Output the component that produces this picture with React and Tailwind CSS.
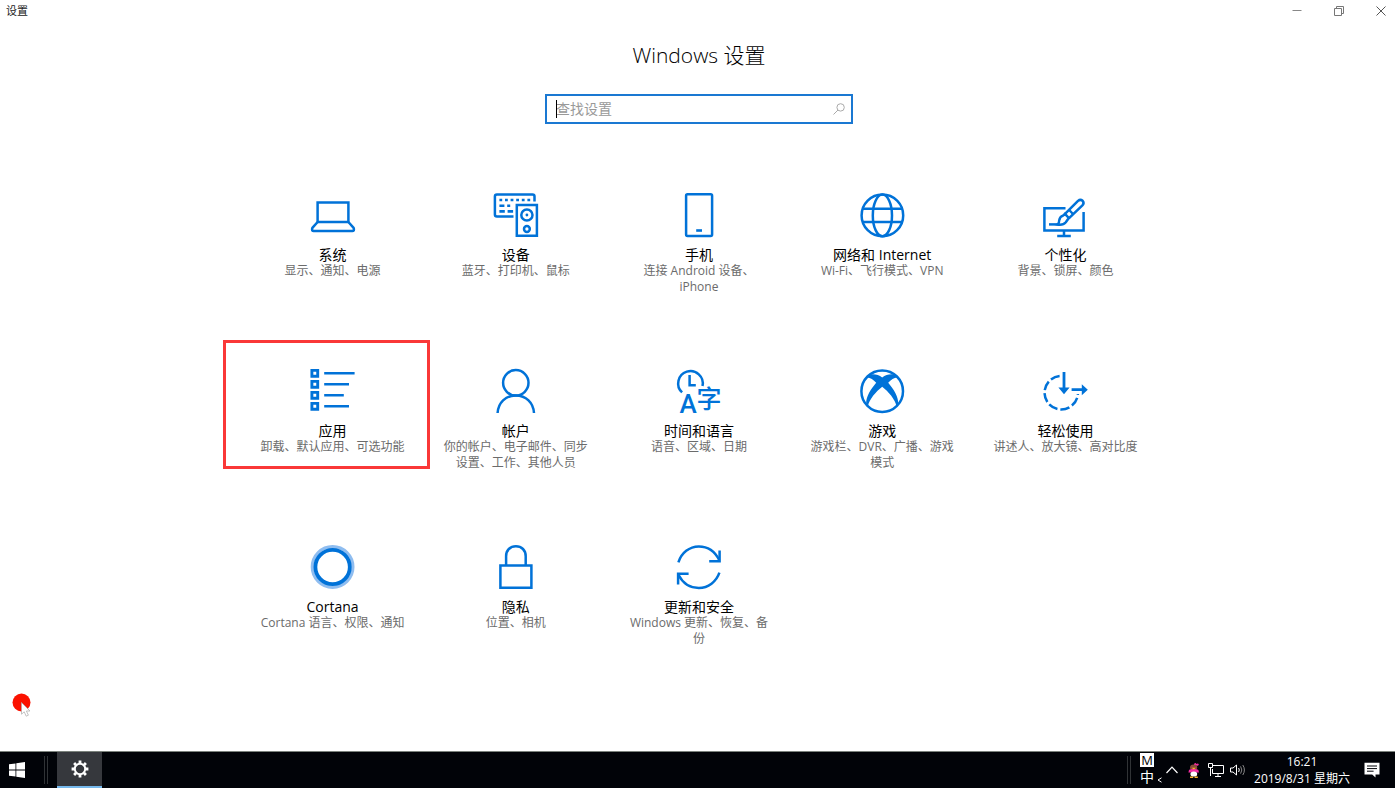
const stroke = { fill: "none", stroke: "currentColor", strokeWidth: 2.5 };

function Glyph({ children }) {
  return (
    <svg viewBox="0 0 44 44" className="h-11 w-11 shrink-0 overflow-visible text-[#0072d8]" aria-hidden="true">
      {children}
    </svg>
  );
}

const LaptopIcon = () => (
  <Glyph>
    <g {...stroke}>
      <path d="M6.6 29V9.6H37.4V29Z" />
      <path d="M6.6 29L1.6 34.6Q1.1 35.2 1.1 36V36.6Q1.1 38 2.5 38H41.5Q42.9 38 42.9 36.6V36Q42.9 35.2 42.4 34.6L37.4 29" />
    </g>
  </Glyph>
);

const DevicesIcon = () => (
  <Glyph>
    <g {...stroke}>
      <path d="M19.5 23.6H2.9Q.9 23.6 .9 21.6V3.4Q.9 1.4 2.9 1.4H38.5Q40.5 1.4 40.5 3.4V8.6" />
      <path d="M22.8 12.1H42.9V42.7H22.8Z" />
      <circle cx="32.9" cy="22" r="5.6" />
      <circle cx="32.9" cy="36" r="2.9" />
    </g>
    <circle cx="32.9" cy="22" r="1.4" fill="currentColor" />
    <g stroke="currentColor" strokeWidth="2.6">
      <path d="M5.4 7H37" strokeDasharray="2.8 2.8" />
      <path d="M5.4 12.7H10.4M13.2 12.7H16.2M5.4 18.4H10.8M13.6 18.4H19.1" />
    </g>
  </Glyph>
);

const PhoneIcon = () => (
  <Glyph>
    <rect x="9.1" y="1.3" width="26" height="41.6" rx="1.4" {...stroke} />
    <path d="M19.2 37.5H25" stroke="currentColor" strokeWidth="2.6" />
  </Glyph>
);

const GlobeIcon = () => (
  <Glyph>
    <g {...stroke}>
      <circle cx="22.4" cy="22.4" r="20.8" />
      <ellipse cx="22.4" cy="22.4" rx="9.6" ry="20.8" />
      <path d="M2.8 15.8H42M2.8 29H42" />
    </g>
  </Glyph>
);

const PersonalizeIcon = () => (
  <Glyph>
    <g {...stroke}>
      <path d="M22.5 15.2H1.4V37.6H40.6V19.1" />
      <path d="M21 38V42.6M14.2 42.9H27.8" />
      <path d="M22 20.8L35 7.9Q37.4 5.9 39.6 7.8Q41.6 10.2 39.4 12.4L25.8 25.4" strokeLinejoin="round" />
      <path d="M26.2 17L30 21" />
      <path d="M22 20.8L25.8 25L22.8 29.2Q20.2 32.4 14.4 31.4Q16.4 30 16.2 27.4Q16.8 23.6 20 22.6Z" />
      <path d="M6 31.4H16" />
    </g>
  </Glyph>
);

const AppsIcon = () => (
  <Glyph>
    <path
      d="M.9 1.4h5.8v5.8h-5.8zM.9 12.4h5.8v5.8h-5.8zM.9 23.4h5.8v5.8h-5.8zM.9 34.4h5.8v5.8h-5.8z"
      fill="none"
      stroke="currentColor"
      strokeWidth="2.9"
    />
    <path d="M13.2 4.3H43.6M13.2 15.3H38M13.2 26.3H32.8M13.2 37.3H38" stroke="currentColor" strokeWidth="2.5" />
  </Glyph>
);

const AccountIcon = () => (
  <Glyph>
    <g {...stroke}>
      <circle cx="21.8" cy="13.8" r="12.7" />
      <path d="M3.6 44C4.2 33.6 11.6 26.5 21.8 26.5S39.4 33.6 40 44" />
    </g>
  </Glyph>
);

const TimeIcon = () => (
  <Glyph>
    <path d="M5.1 23.4A12.3 12.3 0 1 1 25.5 17" {...stroke} />
    <path d="M12.6 6V16.2H18.8" {...stroke} />
    <text x="11" y="43.8" textAnchor="middle" fill="currentColor" fontFamily="Roboto, sans-serif" fontWeight="500" fontSize="26">A</text>
    <text x="32" y="38.8" textAnchor="middle" fill="currentColor" fontFamily="Noto Sans CJK SC, sans-serif" fontWeight="500" fontSize="25">字</text>
  </Glyph>
);

const GamingIcon = () => (
  <Glyph>
    <circle cx="22.2" cy="22.2" r="20.8" {...stroke} />
    <path
      d="M9 6C13.4 4.4 18.4 5.8 22.2 8.4C26 5.8 31 4.4 35.4 6L37.4 8.4C34.4 8.2 31 10.6 28.2 13.8C33.6 20 38.6 28 38.2 34.6L36.4 37C35 30.2 28.4 22.6 22.2 17.8C16 22.6 9.4 30.2 8 37L6.2 34.6C5.8 28 10.8 20 16.2 13.8C13.4 10.6 10 8.2 7 8.4Z"
      fill="currentColor"
    />
  </Glyph>
);

const EaseIcon = () => (
  <Glyph>
    <path d="M16.6 7.1A16.7 16.7 0 1 0 34.9 25" {...stroke} strokeDasharray="9.4 3" />
    <path d="M21 3V20M28.6 20.7H40" {...stroke} strokeWidth="2.8" />
    <path d="M15.4 18.4H26.6L21 25.2ZM38.8 15.2V26.2L44.8 20.7Z" fill="currentColor" />
  </Glyph>
);

const CortanaIcon = () => (
  <Glyph>
    <circle cx="21.6" cy="22" r="20.3" fill="none" stroke="#8fbdf0" strokeWidth="3.2" />
    <circle cx="21.6" cy="22" r="17.2" fill="none" stroke="currentColor" strokeWidth="3.8" />
  </Glyph>
);

const LockIcon = () => (
  <Glyph>
    <g {...stroke}>
      <path d="M6.4 20.4H37.4V42.8H6.4Z" />
      <path d="M12.1 20V11.2C12.1 5.2 16.1 1.3 21.9 1.3S31.7 5.2 31.7 11.2V20" />
    </g>
  </Glyph>
);

const UpdateIcon = () => (
  <Glyph>
    <g {...stroke}>
      <path d="M1.4 17.4C4.4 7.8 12.4 1.4 21.8 1.4C30.4 1.4 37.8 6 42.2 15" />
      <path d="M42.6 5.6V16.2H32.2" />
      <path d="M42.4 27.6C39.4 36.6 31.2 42.9 21.8 42.9C13.2 42.9 5.8 38.2 1.6 30" />
      <path d="M1.1 39.6V28.8H11.6" />
    </g>
  </Glyph>
);

const categories = [
  { title: "系统", detail: "显示、通知、电源", Icon: LaptopIcon },
  { title: "设备", detail: "蓝牙、打印机、鼠标", Icon: DevicesIcon },
  { title: "手机", detail: "连接 Android 设备、iPhone", Icon: PhoneIcon },
  { title: "网络和 Internet", detail: "Wi-Fi、飞行模式、VPN", Icon: GlobeIcon },
  { title: "个性化", detail: "背景、锁屏、颜色", Icon: PersonalizeIcon },
  { title: "应用", detail: "卸载、默认应用、可选功能", Icon: AppsIcon, marked: true },
  { title: "帐户", detail: "你的帐户、电子邮件、同步设置、工作、其他人员", Icon: AccountIcon },
  { title: "时间和语言", detail: "语音、区域、日期", Icon: TimeIcon },
  { title: "游戏", detail: "游戏栏、DVR、广播、游戏模式", Icon: GamingIcon },
  { title: "轻松使用", detail: "讲述人、放大镜、高对比度", Icon: EaseIcon },
  { title: "Cortana", detail: "Cortana 语言、权限、通知", Icon: CortanaIcon },
  { title: "隐私", detail: "位置、相机", Icon: LockIcon },
  { title: "更新和安全", detail: "Windows 更新、恢复、备份", Icon: UpdateIcon },
];

function Category({ title, detail, Icon, marked }) {
  return (
    <li className="relative flex min-h-32 justify-center">
      <a href="#" className="flex w-[148px] flex-col items-center text-center">
        <Icon />
        <span className="mt-2.5 text-sm leading-4 whitespace-nowrap text-black">{title}</span>
        <span className="text-xs leading-4 text-[#6b6b6b]">{detail}</span>
      </a>
      {marked && (
        <span className="pointer-events-none absolute -top-[29px] -left-[18px] h-[129px] w-[207px] border-3 border-[#fa3838]" />
      )}
    </li>
  );
}

function TitleBar() {
  const button = "flex h-5 w-7 items-center justify-center";
  return (
    <header className="flex h-[22px] items-center justify-between pl-1.5 text-[11px] text-[#222]">
      <span>设置</span>
      <div className="flex gap-3.5">
        <button aria-label="最小化" className={button}>
          <svg viewBox="0 0 10 10" className="h-2.5 w-2.5"><path d="M.5 4.5H9.5" stroke="#888" /></svg>
        </button>
        <button aria-label="还原" className={button}>
          <svg viewBox="0 0 10 10" className="h-2.5 w-2.5" fill="none" stroke="#777">
            <path d="M.5 2.5H7.5V9.5H.5ZM2.5 2.5V.5H9.5V7.5H7.5" />
          </svg>
        </button>
        <button aria-label="关闭" className={button}>
          <svg viewBox="0 0 10 10" className="h-2.5 w-2.5"><path d="M.5 .5L9.5 9.5M9.5 .5L.5 9.5" stroke="#555" /></svg>
        </button>
      </div>
    </header>
  );
}

function SearchBox() {
  return (
    <div className="relative mt-6 flex h-[30px] w-[308px] items-center border-2 border-[#1a78d2] bg-white pr-1.5 pl-[9px]">
      <input
        type="text"
        aria-label="查找设置"
        placeholder="查找设置"
        className="min-w-0 flex-1 text-sm text-black outline-none placeholder:text-[#999]"
      />
      <span className="absolute top-1 left-[9px] h-[18px] w-px bg-black" />
      <svg viewBox="0 0 12 12" className="h-3 w-3" fill="none" stroke="#aaa">
        <circle cx="7.6" cy="4.4" r="3.7" />
        <path d="M5 7L.5 11.5" />
      </svg>
    </div>
  );
}

function Divider() {
  return <span className="h-7 w-1 border-x border-[#303336]" />;
}

function Taskbar() {
  return (
    <footer className="flex h-[37px] items-stretch justify-between border-t border-[#7b827c] bg-[#010308] text-white">
      <div className="flex items-center">
        <button aria-label="开始" className="flex h-full w-11 items-center pl-[9px]">
          <svg viewBox="0 0 16 16" className="h-4 w-4" fill="#fff">
            <path d="M0 2.3L6.5 1.4V7.6H0ZM7.3 1.3L16 0V7.6H7.3ZM0 8.4H6.5V14.6L0 13.7ZM7.3 8.4H16V16L7.3 14.7Z" />
          </svg>
        </button>
        <Divider />
        <button aria-label="设置" className="ml-[9px] flex h-full w-[45px] items-center justify-center border-b-2 border-[#76b9ed] bg-[#36383d]">
          <svg viewBox="0 0 18 18" className="h-[18px] w-[18px]" fill="none" stroke="#fff">
            <circle cx="9" cy="9" r="5.2" strokeWidth="2" />
            <path
              d="M9 .6V3.2M9 14.8V17.4M.6 9H3.2M14.8 9H17.4M3.1 3.1L4.9 4.9M13.1 13.1L14.9 14.9M3.1 14.9L4.9 13.1M13.1 4.9L14.9 3.1"
              strokeWidth="2.8"
            />
          </svg>
        </button>
      </div>
      <div className="flex items-center pr-[15px]">
        <Divider />
        <button aria-label="输入法" className="ml-2 flex w-4 flex-col items-center">
          <span className="h-3.5 w-3.5 bg-white text-center text-[13px] leading-3.5 text-black">M</span>
          <span className="text-sm leading-5">中</span>
        </button>
        <svg viewBox="0 0 5 6" className="mt-5 ml-0.5 h-1.5 w-[5px]" fill="none" stroke="#fff">
          <path d="M4.5 .8L1 3L4.5 5.2" />
        </svg>
        <button aria-label="显示隐藏的图标" className="ml-1">
          <svg viewBox="0 0 12 12" className="h-3 w-3" fill="none" stroke="#fff" strokeWidth="1.2"><path d="M.5 9L6 3.2L11.5 9" /></svg>
        </button>
        <button aria-label="QQ" className="ml-2.5">
          <svg viewBox="0 0 12 16" className="h-4 w-3">
            <path d="M6 3C5.8 1 8 .2 8.4 2C9.6 .6 11.6 1.8 10.4 3.2C9.6 4 7.6 4 6 3Z" fill="#f02ba0" />
            <ellipse cx="5.6" cy="5.4" rx="3.6" ry="3" fill="#8a4a3a" />
            <path d="M1 8C3 6.8 8.4 6.8 10.4 8L11 10.4L9 10.4H2.4L.4 10.6Z" fill="#f02ba0" />
            <ellipse cx="5.8" cy="12" rx="3.4" ry="2.6" fill="#fff" />
            <path d="M3.6 5.8H7.8L5.8 7.4Z" fill="#ffb52e" />
            <path d="M2 14.6H5.2V16H2ZM6.6 14.6H9.8V16H6.6Z" fill="#ffb52e" />
          </svg>
        </button>
        <button aria-label="网络" className="ml-2">
          <svg viewBox="0 0 16 14" className="h-3.5 w-4" fill="none" stroke="#fff">
            <path d="M5 2.5H15.5V10.5H4.5V6M10 10.5V13M7 13.5H13M.5 .5H4.5V4.5H.5ZM2.5 4.5V13" />
          </svg>
        </button>
        <button aria-label="音量" className="ml-1.5">
          <svg viewBox="0 0 16 14" className="h-3.5 w-4" fill="none" stroke="#fff">
            <path d="M.5 5H3L6.5 2V12L3 9H.5Z" />
            <path d="M8.6 5Q10 7 8.6 9" />
            <path d="M10.6 3.4Q13 7 10.6 10.6M12.8 2Q16 7 12.8 12" stroke="#888" />
          </svg>
        </button>
        <button className="ml-2 flex w-24 flex-col items-center text-xs leading-[17px] whitespace-nowrap">
          <time>16:21</time>
          <span>2019/8/31 星期六</span>
        </button>
        <button aria-label="通知" className="ml-3.5">
          <svg viewBox="0 0 16 16" className="h-4 w-4">
            <path d="M.5 .8H15.5V12.4H11.5V15.6L8.2 12.4H.5Z" fill="#fff" />
            <path d="M3 4H13M3 6.6H13M3 9.2H9.6" stroke="#010308" />
          </svg>
        </button>
      </div>
    </footer>
  );
}

export default function App() {
  return (
    <div className="relative flex min-h-screen flex-col bg-white font-['Open_Sans','Noto_Sans_CJK_SC',sans-serif]">
      <TitleBar />
      <main className="flex flex-1 flex-col items-center pl-[3px]">
        <h1 className="mt-[18px] text-[21px] leading-[30px] font-light text-black">Windows 设置</h1>
        <SearchBox />
        <ul className="mt-[69px] grid w-full max-w-[916px] grid-cols-2 gap-y-12 sm:grid-cols-3 lg:grid-cols-5">
          {categories.map((category) => (
            <Category key={category.title} {...category} />
          ))}
        </ul>
      </main>
      <Taskbar />
      <svg viewBox="0 0 20 24" className="pointer-events-none absolute bottom-[71px] left-3 h-6 w-5">
        <circle cx="9.5" cy="9.5" r="9" fill="#fb1200" />
        <path d="M9.5 9.5V21.2L12.2 18.8L14.2 23.2L16.4 22.2L14.4 18H18Z" fill="#fff" stroke="#aaa" strokeWidth=".7" />
      </svg>
    </div>
  );
}
